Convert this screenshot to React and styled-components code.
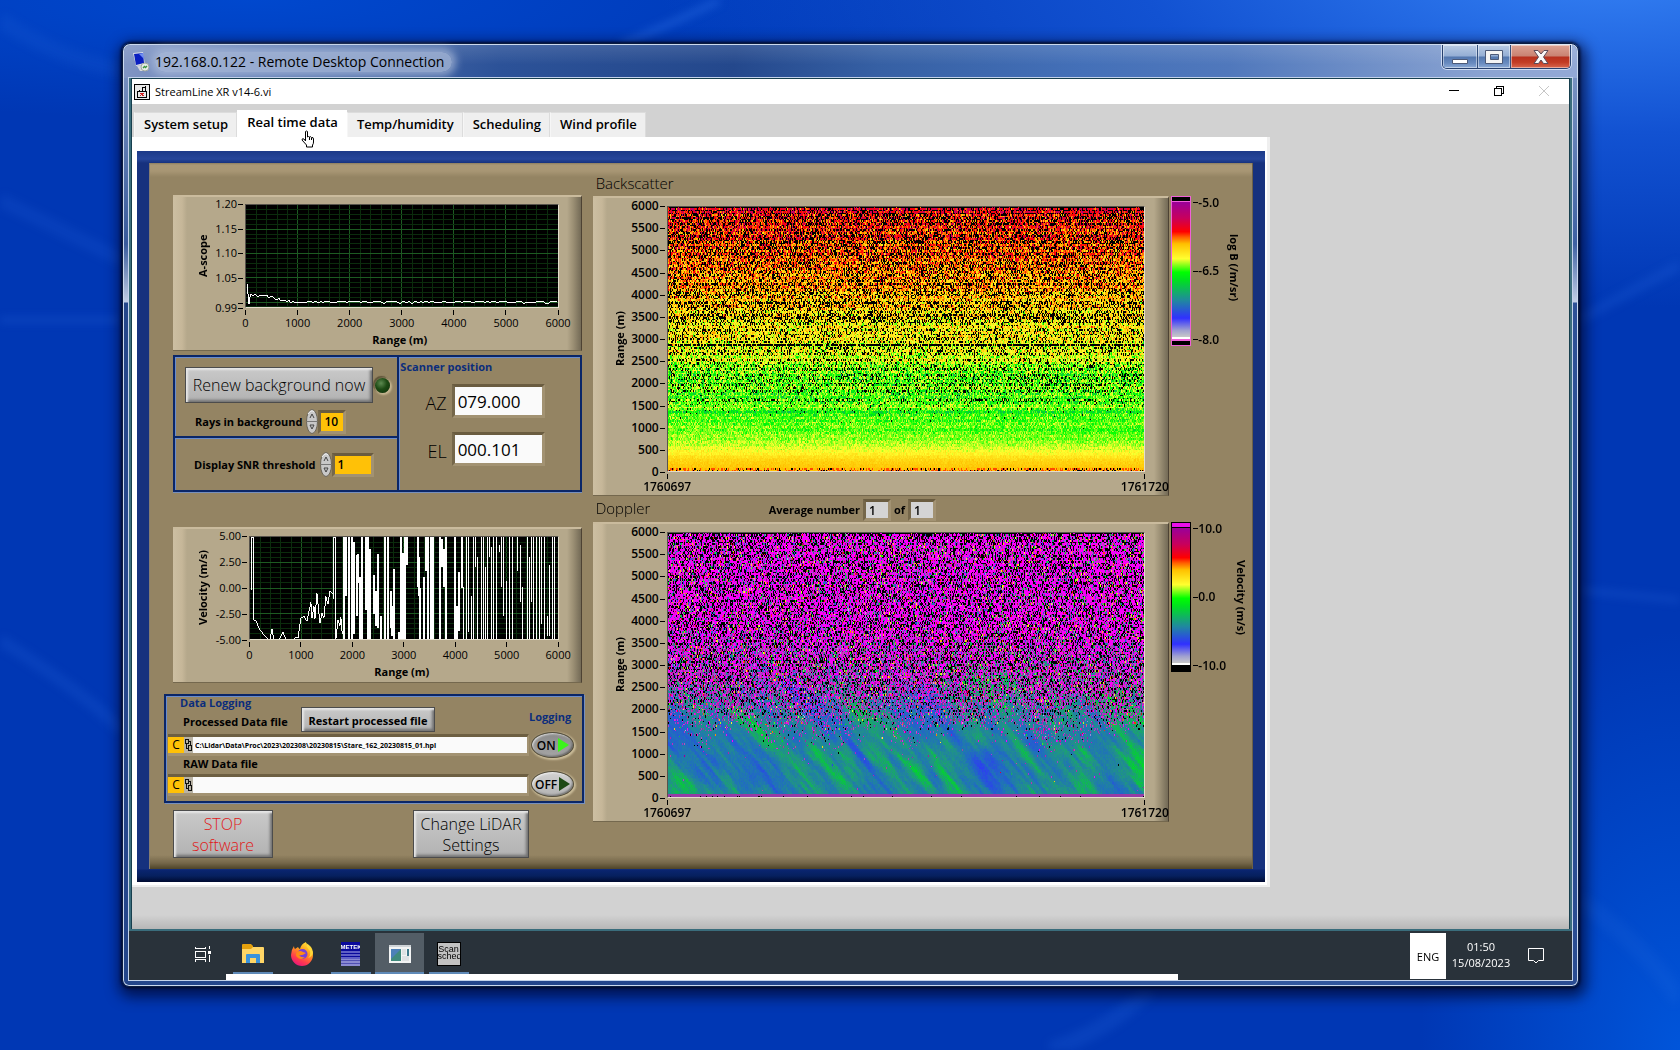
import React, { useEffect, useRef } from "react";
import styled, { createGlobalStyle } from "styled-components";

const GlobalStyle = createGlobalStyle`
  * {
    box-sizing: border-box;
  }
  body {
    margin: 0;
    font-family: "Open Sans", "Noto Sans", sans-serif;
    color: #000;
  }
  button, input {
    font-family: inherit;
    margin: 0;
  }
`;

/* ---------- desktop and window frame ---------- */

const Desktop = styled.div`
  min-height: 100vh;
  padding: 43px 101px 63px 122px;
  display: flex;
  position: relative;
  overflow: hidden;
  background:
    radial-gradient(ellipse 960px 350px at 96% -4%, rgba(58, 136, 250, 0.95), rgba(30, 100, 230, 0.6) 50%, transparent 100%),
    radial-gradient(ellipse 260px 420px at 100% 100%, rgba(0, 88, 222, 0.9), transparent 100%),
    radial-gradient(ellipse 700px 120px at 15% 0%, rgba(0, 76, 212, 0.8), transparent 100%),
    #0037b4;
`;

const Rays = styled.svg`
  position: absolute;
  left: 0;
  top: 0;
  width: 100%;
  height: 100%;
  filter: blur(4px);
`;

const Window = styled.div`
  position: relative;
  flex: 1;
  display: flex;
  flex-direction: column;
  padding: 0 6px 6px;
  border: 1px solid #0b1c40;
  border-radius: 8px 8px 7px 7px;
  background:
    linear-gradient(rgba(160, 180, 216, 0.75), rgba(86, 120, 180, 0.4) 200px, rgba(210, 220, 238, 0.9) 258px, transparent 259px),
    linear-gradient(100deg, #24468a, #23458c 50%, #33599f 80%, #2a4c92);
  box-shadow:
    inset 0 0 0 1px #cbd9ee,
    0 0 3px 1px rgba(0, 5, 30, 0.9),
    2px 5px 14px 5px rgba(0, 8, 50, 0.75);
`;

const TitleBar = styled.header`
  height: 33px;
  margin: 1px -5px 0;
  padding-left: 9px;
  display: flex;
  align-items: flex-start;
  border-radius: 7px 7px 0 0;
  background:
    linear-gradient(rgba(255, 255, 255, 0.12), transparent 60%),
    linear-gradient(100deg, #8296c4 0, #5c7ab4 9%, #2c5298 26%, #24488c 42%, #3660a4 52%, #4470b8 66%, #5078bc 76%, #8ba4d2 94%, #93a9d6);
`;

const TitleText = styled.h1`
  margin: 7px 0 0 5px;
  padding: 0 8px 0 0;
  font-size: 14px;
  font-weight: 400;
  line-height: 20px;
  border-radius: 10px;
  background: rgba(172, 188, 218, 0.75);
  box-shadow: 0 0 8px 4px rgba(172, 188, 218, 0.75);
`;

const RdpIcon = styled.svg`
  width: 17px;
  height: 20px;
  margin-top: 7px;
  position: relative;
  z-index: 1;
`;

const CaptionButtons = styled.div`
  margin-left: auto;
  margin-right: 6px;
  display: flex;
  height: 24px;
  border: 1px solid #26406e;
  border-top: 0;
  border-radius: 0 0 5px 5px;
  overflow: hidden;
  box-shadow: 0 0 0 1px rgba(225, 235, 250, 0.8);
`;

const CaptionButton = styled.button`
  width: ${(props) => props.$width}px;
  padding: 0;
  display: flex;
  align-items: center;
  justify-content: center;
  border: 0;
  border-right: 1px solid #33507e;
  box-shadow: inset 0 0 0 1px rgba(255, 255, 255, 0.45);
  background: ${(props) =>
    props.$danger
      ? "linear-gradient(#dda394, #c98272 48%, #b8301e 52%, #c23c24 75%, #d8674e)"
      : "linear-gradient(#b9cbe4, #94aed4 48%, #5377ae 52%, #6a8cc0 80%, #8dabd6)"};
  &:last-child {
    border-right: 0;
  }
`;

const Screen = styled.div`
  flex: 1;
  display: flex;
  flex-direction: column;
  background: #29323a;
  box-shadow: 0 0 0 1px #c3d2ea;
`;

/* ---------- remote application ---------- */

const RemoteApp = styled.div`
  flex: 1;
  display: flex;
  flex-direction: column;
  padding: 1px 1px 0;
  border: solid #3a6d7c;
  border-width: 0 2px 2px;
  background: #173f4e;
`;

const AppTitle = styled.div`
  height: 25px;
  padding: 0 3px 0 2px;
  display: flex;
  align-items: center;
  background: #fff;
`;

const AppName = styled.span`
  flex: 1;
  margin-left: 5px;
  font-size: 11px;
  line-height: 16px;
`;

const AppButton = styled.button`
  width: 45px;
  height: 24px;
  padding: 0 0 2px;
  border: 0;
  background: none;
  display: flex;
  align-items: center;
  justify-content: center;
`;

const Workspace = styled.div`
  flex: 1;
  padding-top: 6px;
  background: linear-gradient(transparent calc(100% - 14px), rgba(0, 0, 0, 0.13)), #d2d2d2;
`;

const Tabs = styled.nav`
  display: flex;
  align-items: flex-end;
  height: 27px;
  padding-left: 2px;
  position: relative;
`;

const Tab = styled.button`
  height: ${(props) => (props.$active ? 27 : 25)}px;
  padding: 0 8px ${(props) => (props.$active ? 5 : 3)}px 9px;
  border: 1px solid ${(props) => (props.$active ? "#fff" : "#dcdcdc")};
  border-left-color: ${(props) => (props.$active ? "#fff" : "#f6f6f6")};
  border-bottom: 0;
  background: ${(props) => (props.$active ? "#fff" : "#efefef")};
  font-size: 13px;
  font-weight: 600;
  line-height: 20px;
`;

const HandCursor = styled.svg`
  position: absolute;
  left: 168px;
  top: 20px;
  width: 16px;
  height: 18px;
`;

const Page = styled.main`
  width: 79.2%;
  padding: 14px 2px 3px 5px;
  border: solid #efefef;
  border-width: 0 3px 2px 0;
  background: #fff;
`;

const BlueFrame = styled.div`
  padding: 12px 12px 13px;
  background:
    linear-gradient(#1c3a88, #26469a 8px, transparent 12px),
    linear-gradient(to top, #000a30, #06205e 6px, #0a2570 12px, transparent 13px),
    #16317e;
`;

const FrontPanel = styled.div`
  display: grid;
  grid-template-columns: 420fr 660fr;
  column-gap: 9px;
  padding-left: 14px;
  height: 706px;
  border-left: 1px solid #857c70;
  border-right: 1px solid #6b6048;
  background:
    linear-gradient(#8c7e60, #a99876 2px, #a89674 8px, transparent 14px),
    linear-gradient(to top, #4e4328, #75674a 6px, transparent 14px),
    #948463;
`;

const LeftColumn = styled.div`
  padding-top: 32px;
`;

const RightColumn = styled.div`
  padding-top: 9px;
`;

/* ---------- plots ---------- */

const PlotPanel = styled.section`
  padding: ${(props) => props.$padding};
  margin: ${(props) => props.$margin || 0};
  height: ${(props) => props.$height}px;
  display: grid;
  grid-template-columns: 16px ${(props) => props.$axis}px 1fr;
  grid-template-rows: ${(props) => props.$plot}px auto;
  border: solid;
  border-width: 2px 1px 1px 0;
  border-color: #cabb9d #4d4233 #74684e #cabb9d;
  background: linear-gradient(
    to right,
    #cdbfa2,
    #c6b799 9px,
    #b5a88b 14px,
    #b5a88b calc(100% - 14px),
    #9c9075 calc(100% - 8px),
    #736a56
  );
`;

const AxisTitle = styled.div`
  writing-mode: vertical-rl;
  transform: ${(props) => (props.$down ? "none" : "rotate(180deg)")};
  text-align: center;
  font-size: 11px;
  font-weight: 700;
  line-height: 16px;
  white-space: nowrap;
`;

const YAxis = styled.div`
  display: flex;
  flex-direction: column;
`;

const YTick = styled.div`
  flex: ${(props) => props.$weight} 1 0;
  min-height: 0;
  display: flex;
  justify-content: flex-end;
  gap: 1px;
  padding-right: 2px;
  font-size: ${(props) => props.$size}px;
  font-weight: ${(props) => (props.$size > 11 ? 600 : 400)};
  line-height: 0;
  &::after {
    content: "";
    width: 5px;
    height: 1px;
    background: #000;
  }
`;

const XAxis = styled.div`
  grid-column: 3;
  display: flex;
  justify-content: space-between;
  padding-top: 2px;
  font-size: ${(props) => props.$size}px;
  font-weight: ${(props) => (props.$size > 11 ? 600 : 400)};
  line-height: 14px;
`;

const XTick = styled.div`
  width: 1px;
  display: flex;
  flex-direction: column;
  align-items: center;
  white-space: nowrap;
  &::before {
    content: "";
    width: 1px;
    height: 5px;
    flex: none;
    margin-bottom: 1px;
    background: #000;
  }
`;

const XTitle = styled.div`
  grid-column: 3;
  text-align: center;
  padding-right: 4px;
  font-size: 11px;
  font-weight: 700;
  line-height: 16px;
`;

const Screenlet = styled.div`
  border: 1px solid;
  border-color: #57534c #e4ddcc #e4ddcc #57534c;
  background: #000;
  display: flex;
`;

const LineSvg = styled.svg`
  width: 100%;
  height: 100%;
  display: block;
`;

const HeatCanvas = styled.canvas`
  width: 100%;
  height: 100%;
  display: block;
  image-rendering: pixelated;
`;

const HeatHeading = styled.div`
  display: flex;
  align-items: center;
  height: ${(props) => props.$height}px;
  padding-left: 3px;
`;

const HeatTitle = styled.h2`
  margin: 0;
  width: 173px;
  padding-bottom: 2px;
  font-size: 15px;
  font-weight: 300;
  line-height: 20px;
`;

const HeatRow = styled.div`
  display: grid;
  grid-template-columns: 578fr 81fr;
  column-gap: 2px;
`;

const Scale = styled.div`
  display: flex;
  height: 150px;
`;

const ScaleBar = styled.div`
  width: 20px;
  display: flex;
  flex-direction: column;
  border: 1px solid ${(props) => props.$edge};
  background: ${(props) => props.$edge};
`;

const ScaleEnd = styled.div`
  height: ${(props) => props.$height}px;
  background: ${(props) => props.$color};
`;

const ScaleFill = styled.div`
  flex: 1;
  border-bottom: 2px solid #fff;
  background: linear-gradient(
    #9a009a,
    #c8005c 12%,
    #ff0000 22%,
    #ff6000 26%,
    #ffc000 31%,
    #ffff30 42%,
    #00ff00 52%,
    #00e020 58%,
    #2088a0 73%,
    #3030ff 86%,
    #a0a0d0 95%,
    #c8c8c8
  );
`;

const ScaleTicks = styled.div`
  display: flex;
  flex-direction: column;
  justify-content: space-between;
  padding: 6px 0;
  margin: 0 7px 0 2px;
`;

const ScaleTick = styled.div`
  height: 1px;
  display: flex;
  align-items: center;
  font-size: 12px;
  font-weight: 600;
  line-height: 14px;
  &::before {
    content: "";
    width: 5px;
    height: 1px;
    background: #000;
  }
`;

const ScaleTitle = styled(AxisTitle)`
  align-self: flex-start;
  margin-top: 38px;
`;

/* ---------- controls ---------- */

const Label = styled.label`
  font-size: 11px;
  font-weight: 700;
  line-height: 16px;
  white-space: nowrap;
`;

const BlueLabel = styled.span`
  font-size: 11px;
  font-weight: 700;
  line-height: 16px;
  color: #0b2d7c;
`;

const MetalButton = styled.button`
  height: ${(props) => props.$height}px;
  width: ${(props) => props.$width}px;
  padding: 1px 0 0;
  border: 1px solid #4c4c4c;
  background: linear-gradient(#c9c9c9, #b2b2b2);
  box-shadow:
    inset 2px 2px 2px #e6e6e6,
    inset -2px -2px 3px #707070;
  color: ${(props) => props.$color || "#000"};
  font-size: ${(props) => props.$size || 16}px;
  font-weight: ${(props) => props.$weight || 300};
  line-height: 21px;
`;

const Groups = styled.div`
  display: grid;
  grid-template-columns: 226fr 182fr;
  grid-template-rows: 81px 56px;
  margin: 4px 2px 35px 9px;
`;

const Group = styled.div`
  grid-row: ${(props) => (props.$tall ? "1 / 3" : "auto")};
  grid-column: ${(props) => (props.$tall ? 2 : 1)};
  margin: 0 0 0 ${(props) => (props.$tall ? -2 : 0)}px;
  border: 2px solid #0a2668;
  border-bottom-width: ${(props) => (props.$open ? 0 : 2)}px;
  box-shadow: inset 1px 1px 0 #6a8ccc, 0 1px 0 #7890bc;
`;

const ButtonRow = styled.div`
  display: flex;
  align-items: center;
  gap: 2px;
  padding: 10px 0 0 10px;
`;

const Led = styled.span`
  width: 15px;
  height: 15px;
  border-radius: 50%;
  background: radial-gradient(circle at 40% 35%, #5d8a50, #1d4a14 45%, #0c2c08);
  box-shadow: 1px 1px 2px 1px #c8b892, -1px -1px 1px 1px #5a5036;
`;

const NumericRow = styled.div`
  display: flex;
  align-items: center;
  padding: ${(props) => props.$padding};
`;

const Spinner = styled.svg`
  width: 12px;
  height: 25px;
  margin: 0 0 0 4px;
`;

const Field = styled.input`
  width: ${(props) => props.$width}px;
  height: ${(props) => props.$height}px;
  padding: 0 0 0 3px;
  border: 3px solid;
  border-color: #6a5c40 #a29272 #a29272 #75674a;
  border-radius: 0;
  outline: 0;
  background: ${(props) => props.$bg || "#fafafa"};
  color: #000;
  font-size: ${(props) => props.$size || 12}px;
  font-weight: ${(props) => props.$weight || 400};
`;

const ScannerTitle = styled(BlueLabel)`
  display: block;
  padding: 2px 0 9px 1px;
`;

const ScannerRow = styled.div`
  display: flex;
  align-items: center;
  justify-content: flex-end;
  gap: 5px;
  padding-right: 35px;
  margin-bottom: 14px;
`;

const ScannerLabel = styled.label`
  padding-top: 4px;
  font-size: 18px;
  font-weight: 300;
  line-height: 24px;
`;

const AverageSet = styled.div`
  display: flex;
  align-items: center;
  gap: 3px;
  padding-top: 2px;
`;

const Logging = styled.section`
  margin-top: 11px;
  height: 109px;
  padding: 0 7px 0 2px;
  border: 2px solid #0a2668;
  box-shadow: inset 1px 1px 0 #6a8ccc, 1px 1px 0 #7890bc;
  display: grid;
  grid-template-columns: 1fr 45px;
  column-gap: 1px;
`;

const LoggingMain = styled.div`
  display: flex;
  flex-direction: column;
`;

const LoggingHead = styled.div`
  height: 38px;
  display: flex;
  align-items: flex-end;
  padding-bottom: 2px;
`;

const LoggingLabels = styled.div`
  width: 133px;
  display: flex;
  flex-direction: column;
  padding: 0 0 2px 12px;
  gap: 3px;

  ${Label} {
    padding-left: 3px;
  }
`;

const PathRow = styled.div`
  display: flex;
  height: 22px;
  border: solid;
  border-width: 3px 2px 3px 0;
  border-color: #6d5f42 #a29272 #a29272 #75674a;
`;

const Drive = styled.button`
  width: 16px;
  padding: 0;
  border: 0;
  background: #ffc107;
  font-size: 12px;
  line-height: 16px;
`;

const PathIcon = styled.svg`
  width: 9px;
  height: 16px;
  background: #b9b3a5;
`;

const PathInput = styled.input`
  flex: 1;
  min-width: 0;
  height: 16px;
  padding: 0 2px;
  border: 0;
  outline: 0;
  background: #fafafa;
  font-size: 7px;
  font-weight: 700;
`;

const Toggles = styled.div`
  display: flex;
  flex-direction: column;
  align-items: center;
  padding-top: 13px;

  ${BlueLabel} {
    padding-right: 4px;
  }
`;

const Toggle = styled.button`
  width: 43px;
  height: 26px;
  margin-top: ${(props) => props.$top}px;
  padding: 0 0 0 1px;
  display: flex;
  align-items: center;
  justify-content: center;
  gap: 2px;
  border: 1px solid #55503f;
  border-radius: 50%;
  background: ${(props) => (props.$on ? "linear-gradient(#8a8a8a, #a6a6a6)" : "linear-gradient(#d2d2d2, #b4b4b4)")};
  box-shadow:
    inset 1px 1px 2px rgba(255, 255, 255, 0.7),
    inset -1px -1px 2px rgba(0, 0, 0, 0.4),
    1px 1px 2px 1px #cbbd9a;
  font-size: 12px;
  font-weight: 600;
  &::after {
    content: "";
    border-left: 11px solid ${(props) => (props.$on ? "#3cf41a" : "#1d4a14")};
    border-top: 7px solid transparent;
    border-bottom: 7px solid transparent;
  }
`;

const ButtonsRow = styled.div`
  display: flex;
  gap: 140px;
  padding: 7px 0 0 9px;
`;

/* ---------- taskbar ---------- */

const Taskbar = styled.footer`
  height: 49px;
  display: grid;
  grid-template-columns: 97px 1fr 162px;
  grid-template-rows: 41px 6px;
  padding-top: 2px;
`;

const TaskButtons = styled.div`
  grid-row: 1;
  grid-column: 1 / 3;
  display: flex;
  padding-left: 48px;
`;

const TaskButton = styled.button`
  width: ${(props) => (props.$first ? 51 : 49)}px;
  height: 41px;
  padding: 0;
  border: 0;
  display: flex;
  align-items: center;
  justify-content: center;
  background-color: ${(props) => (props.$active ? "#535d66" : "transparent")};
  background-image: ${(props) => (props.$running ? "linear-gradient(#5f8ab8, #5f8ab8)" : "none")};
  background-position: bottom center;
  background-repeat: no-repeat;
  background-size: ${(props) => (props.$active ? 49 : 40)}px 2px;
`;

const ScrollStrip = styled.div`
  grid-row: 2;
  grid-column: 2;
  width: 80.4%;
  background: #fff;
`;

const Tray = styled.div`
  grid-row: 1 / 3;
  grid-column: 3;
  display: flex;
`;

const Language = styled.button`
  width: 36px;
  height: 46px;
  padding: 0;
  border: 0;
  background: #fff;
  font-size: 11px;
`;

const Clock = styled.div`
  width: 70px;
  padding-top: 6px;
  text-align: center;
  font-size: 11px;
  line-height: 16px;
  color: #fff;
`;

const Notify = styled.button`
  width: 19px;
  height: 44px;
  margin-left: 11px;
  padding: 0;
  border: 0;
  background: none;
  display: flex;
  align-items: center;
`;

/* ---------- data ---------- */

const random = (seed) => {
  let s = seed;
  return () => {
    s = (s * 1664525 + 1013904223) >>> 0;
    return s / 4294967296;
  };
};

const stops = [
  [0, 200, 200, 200],
  [0.05, 160, 160, 210],
  [0.14, 48, 48, 255],
  [0.27, 32, 110, 190],
  [0.36, 32, 150, 130],
  [0.45, 0, 215, 40],
  [0.49, 0, 255, 0],
  [0.59, 255, 255, 48],
  [0.7, 255, 192, 0],
  [0.75, 255, 96, 0],
  [0.79, 255, 0, 0],
  [0.89, 200, 0, 92],
  [1, 154, 0, 154],
];

const colour = (value) => {
  const t = Math.max(0, Math.min(1, value));
  let i = 1;
  while (i < stops.length - 1 && stops[i][0] < t) i += 1;
  const a = stops[i - 1];
  const b = stops[i];
  const f = (t - a[0]) / (b[0] - a[0]);
  return [1, 2, 3].map((k) => a[k] + (b[k] - a[k]) * f);
};

const interpolate = (points, x) => {
  let i = 1;
  while (i < points.length - 1 && points[i][0] < x) i += 1;
  const [x0, y0] = points[i - 1];
  const [x1, y1] = points[i];
  return y0 + ((y1 - y0) * (x - x0)) / (x1 - x0);
};

const COLS = 476;
const ROWS = 177;
const BLACK = [0, 0, 0];

const backscatterLevel = [
  [0, 0.7], [250, 0.67], [420, 0.61], [600, 0.57], [900, 0.54], [1250, 0.525], [1600, 0.53],
  [2000, 0.545], [2450, 0.56], [2500, 0.6], [3000, 0.63], [3500, 0.65], [4000, 0.695],
  [4500, 0.73], [5000, 0.765], [5500, 0.785], [6000, 0.82],
];
const backscatterGaps = [
  [0, 0], [900, 0], [1200, 0.005], [1400, 0.03], [1700, 0.12], [2450, 0.2], [2550, 0.13],
  [3000, 0.23], [3600, 0.32], [4500, 0.32], [6000, 0.36],
];

function backscatter() {
  const rnd = random(71);
  const cells = [];
  for (let r = 0; r < ROWS; r += 1) {
    const range = 6000 * (1 - (r + 0.5) / ROWS);
    const high = Math.min(1, range / 2000);
    let level = interpolate(backscatterLevel, range) + (rnd() - 0.5) * 0.06 * high;
    let gap = interpolate(backscatterGaps, range);
    gap += gap > 0.08 ? (rnd() - 0.5) * 0.34 : 0;
    if (Math.abs(range - 2880) < 18) gap = 0.8;
    if (Math.abs(range - 1430) < 20) level = 0.575;
    if (Math.abs(range - 1340) < 18) level = 0.48;
    for (let c = 0; c < COLS; c += 1) {
      const spread = 0.012 + 0.105 * high;
      const n = (rnd() + rnd() + rnd() - 1.6) * spread;
      const drift = range < 1000 ? -0.025 * (c / COLS) * (range / 1000) : 0;
      let cell = colour(level + n + drift);
      if (rnd() < gap) cell = BLACK;
      if (r === 0) cell = rnd() < 0.9 ? BLACK : cell;
      if (range < 60) cell = rnd() < 0.35 ? colour(0.76) : rnd() < 0.25 ? BLACK : cell;
      cells.push(cell);
    }
  }
  return cells;
}

const lattice = (() => {
  const rnd = random(9);
  return Array.from({ length: 4096 }, () => rnd());
})();

const smoothNoise = (x, y) => {
  const xi = Math.floor(x);
  const yi = Math.floor(y);
  const fx = x - xi;
  const fy = y - yi;
  const at = (a, b) => lattice[(((a * 73) ^ (b * 151)) >>> 0) % 4096];
  const sx = fx * fx * (3 - 2 * fx);
  const sy = fy * fy * (3 - 2 * fy);
  const top = at(xi, yi) + (at(xi + 1, yi) - at(xi, yi)) * sx;
  const low = at(xi, yi + 1) + (at(xi + 1, yi + 1) - at(xi, yi + 1)) * sx;
  return top + (low - top) * sy;
};

const dopplerNoise = [
  [0, 0], [1050, 0.004], [1400, 0.07], [1700, 0.28], [2100, 0.58], [2700, 0.86], [3600, 0.96], [6000, 0.98],
];

function doppler() {
  const rnd = random(23);
  const cells = [];
  for (let r = 0; r < ROWS; r += 1) {
    const range = 6000 * (1 - (r + 0.5) / ROWS);
    const rowGap = (rnd() - 0.5) * 0.16;
    for (let c = 0; c < COLS; c += 1) {
      const across = c - r * 1.25 + 400;
      const along = c * 0.6 + r;
      const wind =
        0.285 +
        0.09 * (c / COLS) +
        (smoothNoise(across / 40, along / 90) - 0.5) * 0.12 +
        (smoothNoise(across / 14 + 40, along / 44 + 9) - 0.5) * 0.13 +
        (smoothNoise(across / 4 + 90, along / 18) - 0.5) * 0.1 +
        (rnd() - 0.5) * 0.04;
      const reach = range + (smoothNoise(c / 34, r / 20) - 0.5) * 700 - 60;
      let cell = colour(wind);
      if (rnd() < interpolate(dopplerNoise, reach)) {
        const pick = rnd();
        const black = Math.min(0.31, range / 9500) + rowGap;
        const magenta = 0.12 + Math.min(0.36, Math.max(0, range - 1800) / 6000);
        if (pick < black) cell = BLACK;
        else if (pick < black + magenta) cell = [250, 0, 250];
        else if (pick < 0.86) cell = [150 + rnd() * 60, 20 + rnd() * 60, 160 + rnd() * 50];
        else cell = colour(rnd());
      }
      if (r === 0 && rnd() < 0.8) cell = BLACK;
      if (range < 60) cell = rnd() < 0.04 && range < 30 ? BLACK : [150, 60, 165];
      cells.push(cell);
    }
  }
  return cells;
}

const ascope = (() => {
  const rnd = random(5);
  const points = ["M1,80 2,80 2,90 3,90 3,100 4,93"];
  for (let x = 5; x < 313; x += 2) {
    const base = x < 18 ? 91 : interpolate([[18, 92], [30, 95], [50, 98], [312, 98]], x);
    points.push(`${x},${Math.round(base + (rnd() - 0.5) * 3)}`);
  }
  return points.join(" ");
})();

// [x, upper end, lower end] of each swing once the signal is lost in noise
const swings = [
  [94, 0, 103], [96, 0, 60], [99, 0, 103], [102, 0, 103], [104, 5, 98], [107, 18, 80], [108, 17, 46], [110, 40, 103],
  [112, 0, 103], [116, 0, 74], [118, 0, 103], [120, 12, 103], [124, 38, 78], [126, 55, 90], [128, 17, 92],
  [131, 80, 103], [135, 0, 103], [138, 0, 103], [141, 55, 92], [142, 70, 100], [144, 32, 103], [149, 96, 103],
  [151, 0, 103], [153, 16, 103], [155, 0, 103], [157, 0, 28], [168, 0, 50], [169, 20, 60], [170, 52, 103],
  [174, 40, 103], [176, 0, 34], [178, 0, 103], [181, 0, 103], [183, 0, 103], [190, 0, 103], [192, 2, 30],
  [194, 12, 50], [196, 0, 103], [205, 0, 103], [207, 70, 103], [209, 35, 95], [212, 0, 52], [214, 50, 103],
  [217, 0, 103], [219, 0, 96], [222, 60, 103], [224, 0, 103], [226, 0, 30], [228, 20, 103], [232, 0, 103],
  [234, 0, 103], [236, 30, 103], [238, 0, 103], [240, 0, 20], [242, 10, 103], [244, 0, 103], [247, 0, 103],
  [250, 8, 15], [252, 0, 50], [254, 0, 80], [257, 44, 103], [260, 0, 103], [263, 0, 103], [268, 0, 34],
  [271, 8, 66], [273, 50, 103], [278, 0, 103], [280, 20, 103], [282, 0, 66], [284, 0, 103], [287, 0, 103],
  [290, 0, 103], [292, 0, 88], [295, 0, 103], [298, 80, 100], [300, 28, 100], [303, 0, 103], [305, 0, 103],
];

const velocity =
  "M1,54 2,0 4,0 4,84 6,85 10,94 15,100 18,103 20,103 22,93 24,104 29,104 33,96 36,104 44,104 46,101 " +
  "48,102 51,82 54,80 57,85 61,66 62,82 64,70 65,83 67,57 70,87 72,77 74,82 76,60 78,68 80,55 83,57 " +
  "84,63 84,0 86,0 86,103 88,84 90,90 91,81 92,95 93,98";
const velocitySwings = swings.map(([x, a, b]) => `M${x},${a}V${b}`).join("");

/* ---------- components ---------- */

const Grid = ({ width, height, columns, rows }) => {
  const lines = [];
  for (let i = 1; i < columns * 5; i += 1) {
    const x = (width * i) / (columns * 5);
    lines.push(<line key={`x${i}`} x1={x} x2={x} y1="0" y2={height} stroke={i % 5 ? "#0b2c0d" : "#1d5a22"} />);
  }
  for (let i = 1; i * rows < height; i += 1) {
    const y = i * rows;
    lines.push(<line key={`y${i}`} x1="0" x2={width} y1={y} y2={y} stroke={i % 5 ? "#0b2c0d" : "#1d5a22"} />);
  }
  return <g>{lines}</g>;
};

const LinePlot = ({ label, title, ticks, axis, span, padding, rows, trace, bars }) => (
  <PlotPanel $height={156} $plot={104} $axis={axis} $padding={padding} $margin="0 2px 0 9px">
    <AxisTitle>{title}</AxisTitle>
    <YAxis>
      {ticks.map(([text, weight]) => (
        <YTick key={text} $weight={weight} $size={11}>{text}</YTick>
      ))}
    </YAxis>
    <Screenlet>
      <LineSvg viewBox={`0 0 ${span} 103`} preserveAspectRatio="none" shapeRendering="crispEdges" role="img" aria-label={label}>
        <Grid width={span} height={103} columns={6} rows={rows} />
        <path d={trace} fill="none" stroke="#fff" />
        {bars && <path d={bars} fill="none" stroke="#fff" strokeWidth="1.5" />}
      </LineSvg>
    </Screenlet>
    <XAxis $size={11}>
      {[0, 1000, 2000, 3000, 4000, 5000, 6000].map((n) => (
        <XTick key={n}>{n}</XTick>
      ))}
    </XAxis>
    <XTitle>Range (m)</XTitle>
  </PlotPanel>
);

const HeatPlot = ({ label, generate }) => {
  const canvas = useRef(null);

  useEffect(() => {
    const ctx = canvas.current.getContext("2d");
    const image = ctx.createImageData(COLS, ROWS);
    generate().forEach(([r, g, b], i) => {
      image.data.set([r, g, b, 255], i * 4);
    });
    ctx.putImageData(image, 0, 0);
  }, [generate]);

  const ticks = [];
  for (let n = 6000; n >= 0; n -= 500) ticks.push(n);

  return (
    <PlotPanel $height={300} $plot={266} $axis={39} $padding="8px 23px 0 19px">
      <AxisTitle>Range (m)</AxisTitle>
      <YAxis>
        {ticks.map((n) => (
          <YTick key={n} $weight={n ? 1 : 0} $size={12}>{n}</YTick>
        ))}
      </YAxis>
      <Screenlet>
        <HeatCanvas ref={canvas} width={COLS} height={ROWS} role="img" aria-label={label} />
      </Screenlet>
      <XAxis $size={12}>
        <XTick>1760697</XTick>
        <XTick>1761720</XTick>
      </XAxis>
    </PlotPanel>
  );
};

const ColourScale = ({ edge, over, under, ticks, title }) => (
  <Scale>
    <ScaleBar $edge={edge}>
      <ScaleEnd $height={4} $color={over} />
      <ScaleEnd $height={1} $color={edge} />
      <ScaleFill />
      <ScaleEnd $height={2} $color={edge} />
      <ScaleEnd $height={4} $color={under} />
    </ScaleBar>
    <ScaleTicks>
      {ticks.map((t) => (
        <ScaleTick key={t}>{t}</ScaleTick>
      ))}
    </ScaleTicks>
    <ScaleTitle $down>{title}</ScaleTitle>
  </Scale>
);

const Arrows = () => (
  <Spinner viewBox="0 0 12 25" aria-hidden="true">
    <ellipse cx="6" cy="12.5" rx="5.5" ry="12" fill="#c8c8c8" stroke="#6b6558" />
    <path d="M2 5q3-5 6-2" stroke="#f4f4f4" fill="none" />
    <path d="M1 12.500h10" stroke="#777" />
    <path d="M4 9l2-4 2 4M4 16h4l-2 4z" fill="none" stroke="#444" />
  </Spinner>
);

const LinkGlyph = () => (
  <PathIcon viewBox="0 0 9 16" shapeRendering="crispEdges" aria-hidden="true">
    <path d="M1.500 2.500h3v4h-3zM4.500 8.500h3v5h-3zM4.500 4.500h2v4M2.500 6.500v5h2" fill="none" stroke="#111" />
  </PathIcon>
);

const RemoteDesktopGlyph = () => (
  <RdpIcon viewBox="0 0 17 20" aria-hidden="true">
    <path d="M0 1l10-1 2 13-9 1z" fill="#d8dce6" />
    <path d="M1 2l9-1 1 10-8 2z" fill="#0a1fc0" />
    <path d="M6 2l4-1 1 6z" fill="#6d8cf0" />
    <path d="M4 14l7-1 3 6-7 0z" fill="#d4d7dc" />
    <circle cx="12" cy="15" r="4" fill="#e6ebe6" stroke="#a0a8a0" />
    <path d="M10 16l2-2M12 16l2-2" stroke="#3d9440" strokeWidth="1.4" />
  </RdpIcon>
);

const FolderGlyph = () => (
  <svg width="22" height="19" viewBox="0 0 22 19" aria-hidden="true">
    <path d="M0 1q0-1 1-1h8l2 2v3H0z" fill="#e5a10d" />
    <path d="M0 5h9l2-2h10q1 0 1 1v15H0z" fill="#ffd666" />
    <path d="M4 19v-8q0-1 1-1h12q1 0 1 1v8h-4v-5H8v5z" fill="#3a93dc" />
  </svg>
);

const FirefoxGlyph = () => (
  <svg width="24" height="24" viewBox="0 0 24 24" aria-hidden="true">
    <defs>
      <linearGradient id="fox" x1="0.8" y1="0" x2="0.3" y2="1">
        <stop offset="0" stopColor="#ffe83a" />
        <stop offset="0.4" stopColor="#ff9a1c" />
        <stop offset="0.75" stopColor="#ff3b4e" />
        <stop offset="1" stopColor="#e8157c" />
      </linearGradient>
    </defs>
    <path d="M4 4q0 2 1 3l3-2q1 2 2 2 1-5 6-7 0 3 2 4 5 4 5 9a11 11 0 0 1-22 0q0-5 3-9z" fill="url(#fox)" />
    <circle cx="12.500" cy="12" r="5" fill="#7540d8" />
    <path d="M7 10q3-2 6 0l3 1q-4 3-7 2 2 3 6 2-4 4-8 0-2-2 0-5z" fill="#ff8a16" />
    <path d="M16 1q0 4 4 8 1 5-2 7 5-2 5-6-1-6-7-9z" fill="#ffd83a" />
  </svg>
);

const MetekText = styled.text`
  font: 700 6px "Liberation Sans", sans-serif;
  fill: #fff;
`;

const MetekGlyph = () => (
  <svg width="19" height="24" viewBox="0 0 19 24" aria-hidden="true">
    <path d="M0 0h19v24H0z" fill="#0a0a9c" />
    <MetekText x="10" y="7" textAnchor="middle">METEK</MetekText>
    <path d="M0 10h19M0 13h19M0 16h19" stroke="#b4b4ee" />
    <path d="M0 17h19v7H0z" fill="#8a8ad2" />
    <path d="M0 18.500h19M0 21.500h19" stroke="#5050b4" />
  </svg>
);

const LabviewGlyph = () => (
  <svg width="22" height="18" viewBox="0 0 22 18" aria-hidden="true">
    <path d="M0 0h22v18H0z" fill="#f2f4f4" />
    <path d="M0 0h22v2H0z" fill="#cfd4d8" />
    <path d="M2 4h10v12H2z" fill="#3f8a7c" />
    <path d="M2 4h10L2 14z" fill="#4c80b8" />
    <path d="M13 4h4v6h-4zM13 11h7v5h-7z" fill="#dfe2e4" />
    <path d="M18 4h2v7h-2z" fill="#3f7a8c" />
  </svg>
);

const ScanIcon = styled.span`
  width: 24px;
  height: 24px;
  border: 1px solid #000;
  background: #c2c2c2;
  font: 9px "Liberation Sans", sans-serif;
  line-height: 7px;
  padding-top: 3px;
`;

const TaskViewGlyph = () => (
  <svg width="17" height="16" viewBox="0 0 17 16" fill="none" stroke="#fff" shapeRendering="crispEdges" aria-hidden="true">
    <path d="M1.500 5.500h10v6h-10zM1.500 1v2M11.500 1v2M1 2.500h11M1.500 13v3M11.500 13v3M1 13.500h11M15.500 0v3M15.500 9v7" />
    <path d="M14 5h3v3h-3z" fill="#fff" stroke="none" />
  </svg>
);

const tabs = ["System setup", "Real time data", "Temp/humidity", "Scheduling", "Wind profile"];

const App = () => (
  <>
    <GlobalStyle />
    <Desktop>
      <Rays viewBox="0 0 1680 1050" preserveAspectRatio="none" aria-hidden="true">
        <g fill="none" stroke="#3a7cf0">
          <path d="M620 45Q680 20 720 0" strokeOpacity="0.4" strokeWidth="6" />
          <path d="M0 20Q60 60 122 70" strokeOpacity="0.1" strokeWidth="16" />
          <path d="M0 200L122 260" strokeOpacity="0.12" strokeWidth="14" />
          <path d="M0 320h122" strokeOpacity="0.2" strokeWidth="6" />
          <path d="M0 640Q80 690 122 730" strokeOpacity="0.14" strokeWidth="12" />
          <path d="M1578 320L1680 265" strokeOpacity="0.16" strokeWidth="10" />
          <path d="M1578 590L1680 600" strokeOpacity="0.2" strokeWidth="6" />
          <path d="M1050 1050Q1110 1030 1150 988" strokeOpacity="0.14" strokeWidth="16" />
          <path d="M1578 900Q1640 940 1680 1000" strokeOpacity="0.1" strokeWidth="18" />
        </g>
      </Rays>
      <Window>
        <TitleBar>
          <RemoteDesktopGlyph />
          <TitleText>192.168.0.122 - Remote Desktop Connection</TitleText>
          <CaptionButtons>
            <CaptionButton $width={35} aria-label="Minimize">
              <svg width="18" height="18" viewBox="0 0 18 18" aria-hidden="true">
                <path d="M1.500 11.500h15v4h-15z" fill="#fff" stroke="#4c5a78" />
              </svg>
            </CaptionButton>
            <CaptionButton $width={33} aria-label="Maximize">
              <svg width="18" height="14" viewBox="0 0 18 14" aria-hidden="true">
                <path d="M.5 .5h17v13H.5zM5.500 4.500v5h8v-5z" fill="#f4f4f4" fillRule="evenodd" stroke="#4c5a78" />
              </svg>
            </CaptionButton>
            <CaptionButton $width={59} $danger aria-label="Close">
              <svg width="16" height="14" viewBox="0 0 16 14" aria-hidden="true">
                <path d="M1 .5h4l3 3.500 3-3.500h4L10.500 7l4.500 6.500h-4.500L8 10l-2.500 3.500H1L5.500 7z" fill="#f8f8f8" stroke="#5c4a58" />
              </svg>
            </CaptionButton>
          </CaptionButtons>
        </TitleBar>
        <Screen>
          <RemoteApp>
            <AppTitle>
              <svg width="16" height="16" viewBox="0 0 16 16" shapeRendering="crispEdges" aria-hidden="true">
                <path d="M.5 .5h15v15H.5z" fill="#e8e8e8" stroke="#000" />
                <path d="M3.500 7.500h9v6h-9zM8.500 7V4l3-1v4M5.500 7V6" fill="none" stroke="#000" />
                <path d="M6 12l4-3M6 9l4 3" stroke="#d02020" />
              </svg>
              <AppName>StreamLine XR v14-6.vi</AppName>
              <AppButton aria-label="Minimize window">
                <svg width="10" height="2" aria-hidden="true"><path d="M0 0h10v1H0z" /></svg>
              </AppButton>
              <AppButton aria-label="Restore window">
                <svg width="10" height="10" viewBox="0 0 10 10" fill="none" stroke="#000" shapeRendering="crispEdges" aria-hidden="true">
                  <path d="M.5 2.500h7v7h-7zM2.500 2V.5h7v7H8" />
                </svg>
              </AppButton>
              <AppButton aria-label="Close window">
                <svg width="10" height="10" viewBox="0 0 10 10" stroke="#c6c6c6" aria-hidden="true">
                  <path d="M0 0l10 10M10 0L0 10" />
                </svg>
              </AppButton>
            </AppTitle>
            <Workspace>
              <Tabs>
                {tabs.map((name, i) => (
                  <Tab key={name} $active={i === 1}>{name}</Tab>
                ))}
                <HandCursor viewBox="0 0 16 18" aria-hidden="true">
                  <path d="M5.500 11V1.500q1-1 2 0V7q1-1 2 0 1-1 2 .5 2-.5 2 1.500v3q0 2-1 3v2H6.500v-2L2 10q0-2 2-1z" fill="#fff" stroke="#000" />
                  <path d="M9.500 7v3M11.500 8v2" stroke="#000" />
                </HandCursor>
              </Tabs>
              <Page>
                <BlueFrame>
                  <FrontPanel>
                    <LeftColumn>
                      <LinePlot
                        label="A-scope against range"
                        title="A-scope"
                        ticks={[["1.20", 24], ["1.15", 24], ["1.10", 24], ["1.05", 24], ["", 5], ["0.99", 0]]}
                        axis={34}
                        span={312}
                        padding="7px 22px 0 22px"
                        rows={4.9}
                        trace={ascope}
                      />
                      <Groups>
                        <Group $open>
                          <ButtonRow>
                            <MetalButton $width={188} $height={36}>Renew background now</MetalButton>
                            <Led />
                          </ButtonRow>
                          <NumericRow $padding="6px 0 0 20px">
                            <Label htmlFor="rays">Rays in background</Label>
                            <Arrows />
                            <Field id="rays" $width={28} $height={24} $bg="#ffc107" $weight={600} defaultValue="10" />
                          </NumericRow>
                        </Group>
                        <Group $tall>
                          <ScannerTitle>Scanner position</ScannerTitle>
                          <ScannerRow>
                            <ScannerLabel htmlFor="az">AZ</ScannerLabel>
                            <Field id="az" $width={93} $height={34} $size={17} defaultValue="079.000" />
                          </ScannerRow>
                          <ScannerRow>
                            <ScannerLabel htmlFor="el">EL</ScannerLabel>
                            <Field id="el" $width={93} $height={34} $size={17} defaultValue="000.101" />
                          </ScannerRow>
                        </Group>
                        <Group>
                          <NumericRow $padding="14px 0 0 19px">
                            <Label htmlFor="snr">Display SNR threshold</Label>
                            <Arrows />
                            <Field id="snr" $width={42} $height={24} $bg="#ffc107" $weight={600} defaultValue="1" />
                          </NumericRow>
                        </Group>
                      </Groups>
                      <LinePlot
                        label="Velocity against range"
                        title="Velocity (m/s)"
                        ticks={[["5.00", 1], ["2.50", 1], ["0.00", 1], ["-2.50", 1], ["-5.00", 0]]}
                        axis={38}
                        span={308}
                        padding="7px 22px 0 22px"
                        rows={5.15}
                        trace={velocity}
                        bars={velocitySwings}
                      />
                      <Logging>
                        <LoggingMain>
                          <LoggingHead>
                            <LoggingLabels>
                              <BlueLabel>Data Logging</BlueLabel>
                              <Label htmlFor="processed">Processed Data file</Label>
                            </LoggingLabels>
                            <MetalButton $width={134} $height={25} $size={11} $weight={700}>
                              Restart processed file
                            </MetalButton>
                          </LoggingHead>
                          <PathRow>
                            <Drive>C</Drive>
                            <LinkGlyph />
                            <PathInput
                              id="processed"
                              defaultValue="C:\Lidar\Data\Proc\2023\202308\20230815\Stare_162_20230815_01.hpl"
                            />
                          </PathRow>
                          <LoggingLabels>
                            <Label htmlFor="raw">RAW Data file</Label>
                          </LoggingLabels>
                          <PathRow>
                            <Drive>C</Drive>
                            <LinkGlyph />
                            <PathInput id="raw" defaultValue="" />
                          </PathRow>
                        </LoggingMain>
                        <Toggles>
                          <BlueLabel>Logging</BlueLabel>
                          <Toggle $on $top={7} aria-pressed="true">ON</Toggle>
                          <Toggle $top={13} aria-pressed="false">OFF</Toggle>
                        </Toggles>
                      </Logging>
                      <ButtonsRow>
                        <MetalButton $width={100} $height={48} $color="#e01818">
                          STOP
                          <br />
                          software
                        </MetalButton>
                        <MetalButton $width={116} $height={48}>
                          Change LiDAR
                          <br />
                          Settings
                        </MetalButton>
                      </ButtonsRow>
                    </LeftColumn>
                    <RightColumn>
                      <HeatHeading $height={24}>
                        <HeatTitle>Backscatter</HeatTitle>
                      </HeatHeading>
                      <HeatRow>
                        <HeatPlot label="Backscatter over range and ray number" generate={backscatter} />
                        <ColourScale edge="#f060d8" over="#000" under="#000" ticks={["-5.0", "-6.5", "-8.0"]} title="log B (/m/sr)" />
                      </HeatRow>
                      <HeatHeading $height={26}>
                        <HeatTitle>Doppler</HeatTitle>
                        <AverageSet>
                          <Label htmlFor="average">Average number</Label>
                          <Field id="average" $width={28} $height={22} $bg="#d4d4d4" $weight={600} defaultValue="1" />
                          <Label htmlFor="total">of</Label>
                          <Field id="total" $width={28} $height={22} $bg="#d4d4d4" $weight={600} defaultValue="1" />
                        </AverageSet>
                      </HeatHeading>
                      <HeatRow>
                        <HeatPlot label="Doppler velocity over range and ray number" generate={doppler} />
                        <ColourScale edge="#000" over="#e810e8" under="#000" ticks={["10.0", "0.0", "-10.0"]} title="Velocity (m/s)" />
                      </HeatRow>
                    </RightColumn>
                  </FrontPanel>
                </BlueFrame>
              </Page>
            </Workspace>
          </RemoteApp>
          <Taskbar>
            <TaskButtons>
              <TaskButton $first aria-label="Task view"><TaskViewGlyph /></TaskButton>
              <TaskButton $running aria-label="File Explorer"><FolderGlyph /></TaskButton>
              <TaskButton aria-label="Firefox"><FirefoxGlyph /></TaskButton>
              <TaskButton $running aria-label="Metek"><MetekGlyph /></TaskButton>
              <TaskButton $running $active aria-label="StreamLine"><LabviewGlyph /></TaskButton>
              <TaskButton $running>
                <ScanIcon>Scan sched</ScanIcon>
              </TaskButton>
            </TaskButtons>
            <ScrollStrip />
            <Tray>
              <Language>ENG</Language>
              <Clock>
                01:50
                <br />
                15/08/2023
              </Clock>
              <Notify aria-label="Notifications">
                <svg width="18" height="18" viewBox="0 0 18 18" fill="none" stroke="#fff" aria-hidden="true">
                  <path d="M1.500 2.500h15v12h-5L9 17l-2.500-2.500h-5z" />
                </svg>
              </Notify>
            </Tray>
          </Taskbar>
        </Screen>
      </Window>
    </Desktop>
  </>
);

export default App;
